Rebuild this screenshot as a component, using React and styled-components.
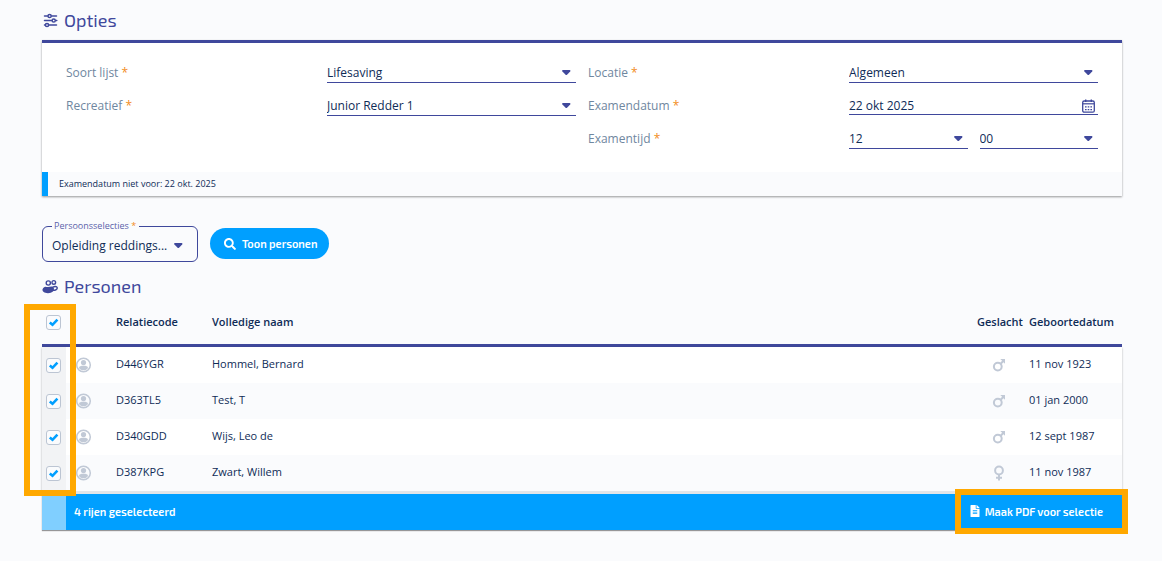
import React, { useState } from "react";
import styled, { createGlobalStyle } from "styled-components";
import { FaSearch, FaFileAlt } from "react-icons/fa";

const GlobalStyle = createGlobalStyle`
  * {
    box-sizing: border-box;
  }

  body {
    margin: 0;
    background: #fafbfd;
    color: #0f2c57;
    font-family: "Open Sans", sans-serif;
    font-size: 12px;
  }

  button,
  input,
  select {
    font: inherit;
    color: inherit;
  }
`;

const Page = styled.main`
  padding: 8px 40px 30px 42px;
`;

const Heading = styled.h2`
  display: flex;
  align-items: center;
  gap: 6px;
  margin: 0;
  height: 26px;
  padding-bottom: 2px;
  color: #3f489c;
  font-family: "Exo 2", "Open Sans", sans-serif;
  font-size: 18px;
  font-weight: 400;
  line-height: 24px;
`;

const Card = styled.section`
  margin-top: 6px;
  border-top: 3px solid #3f489c;
  background: #fff;
  box-shadow: 0 1px 2px rgba(0, 0, 0, 0.4);
`;

const Options = styled.div`
  display: grid;
  grid-template-columns: repeat(4, 1fr);
  grid-auto-rows: 21px;
  gap: 12px;
  align-items: start;
  padding: 19px 24px 23px;
`;

const Label = styled.label`
  color: #6f87a0;
  line-height: 22px;
`;

const Star = styled.span`
  color: #f28c1c;
`;

const Control = styled.div`
  display: flex;
  align-items: center;
  height: ${props => (props.$date ? 20 : 21)}px;
  padding-right: ${props => (props.$date ? 3 : 5)}px;
  border-bottom: 1px solid #3f489c;
  color: #3f489c;
`;

const Select = styled.select`
  flex: 1;
  min-width: 0;
  height: 20px;
  margin-right: -12px;
  padding: 0 16px 0 0;
  border: 0;
  outline: 0;
  appearance: none;
  background: transparent;
  color: #0f2c57;
  text-overflow: ellipsis;
`;

const DateInput = styled.input`
  flex: 1;
  min-width: 0;
  padding: 2px 0 0;
  border: 0;
  outline: 0;
  background: transparent;
  color: #0f2c57;
`;

const Caret = styled.svg`
  flex: none;
  width: 9px;
  height: 8px;
  pointer-events: none;
`;

const TimeFields = styled.div`
  display: grid;
  grid-template-columns: 1fr 1fr;
  gap: 12px;
`;

const IconButton = styled.button`
  display: flex;
  padding: 2px 0 0;
  border: 0;
  background: none;
  color: #3f489c;
`;

const Notice = styled.p`
  margin: 0;
  padding-left: 11px;
  border-left: 6px solid #009fff;
  background: #fafbfd;
  font-size: 9px;
  line-height: 24px;
`;

const Filters = styled.form`
  display: flex;
  align-items: center;
  gap: 12px;
  margin: 24px 0 12px;
`;

const Outline = styled.fieldset`
  width: 156px;
  height: 42px;
  margin: 0;
  padding: 0 14px 0 9px;
  border: 1px solid #3f489c;
  border-radius: 6px;

  legend {
    height: 12px;
    margin: 0;
    padding: 0 3px 0 2px;
    font-size: 9px;
    line-height: 12px;
  }

  label {
    color: #5a62aa;
  }
`;

const OutlineControl = styled.div`
  display: flex;
  align-items: center;
  height: 26px;
  color: #3f489c;
`;

const PillButton = styled.button`
  display: flex;
  align-items: center;
  gap: 6px;
  height: 31px;
  margin-top: 5px;
  padding: 0 12px 0 14px;
  border: 0;
  border-radius: 16px;
  background: #009fff;
  color: #fff;
  font-family: "Exo 2", "Open Sans", sans-serif;
  font-size: 11px;
  font-weight: 600;
`;

const TableWrap = styled.div`
  position: relative;
`;

const Table = styled.table`
  width: 100%;
  table-layout: fixed;
  border-collapse: separate;
  border-spacing: 0;
  font-size: 11px;

  th {
    height: 47px;
    padding: 0 0 2px 8px;
    border-bottom: 3px solid #3f489c;
    font-weight: 600;
    text-align: left;
    white-space: nowrap;
  }

  td {
    height: 36px;
    padding: 0 0 4px 8px;
  }

  tbody {
    box-shadow: 0 1px 2px rgba(0, 0, 0, 0.3);
  }

  tbody tr {
    background: #fff;
  }

  tbody tr:nth-child(even) {
    background: #fafbfd;
  }

  th:first-child,
  td:first-child {
    padding: 0 0 0 4px;
  }

  td:first-child {
    background: #f2f3f5;
  }
`;

const IconCell = styled.td`
  && {
    padding: 0 0 0 ${props => props.$indent}px;
    color: #c1c9d6;
  }

  svg {
    display: block;
    margin: ${props => (props.$center ? "0 auto" : "0")};
  }
`;

const Checkbox = styled.input`
  display: block;
  width: 15px;
  height: 15px;
  margin: 0;
  border: 1px solid #bcc5d3;
  border-radius: 3px;
  appearance: none;
  background: #fafbfd;

  &:checked {
    background: #fafbfd
      url("data:image/svg+xml,%3Csvg xmlns='http://www.w3.org/2000/svg' viewBox='0 0 13 13'%3E%3Cpath d='M2.800 6.500l2.700 2.300 4.900-5.200' fill='none' stroke='%23009fff' stroke-width='2.600'/%3E%3C/svg%3E")
      center / 13px 13px no-repeat;
  }
`;

const SelectionBar = styled.div`
  display: flex;
  align-items: center;
  justify-content: space-between;
  height: 39px;
  padding: 0 19px 2px 8px;
  border-top: 3px solid #e2e5e9;
  border-left: 24px solid #80cfff;
  background: #009fff;
  box-shadow: 0 1px 1px rgba(0, 0, 0, 0.4);
  color: #fff;
  font-family: "Exo 2", "Open Sans", sans-serif;
  font-size: 11px;
  font-weight: 600;
`;

const BarButton = styled.button`
  display: flex;
  align-items: center;
  gap: 4px;
  padding: 0;
  border: 0;
  background: none;
`;

// Highlight frames that lie over the table
const Marker = styled.div`
  position: absolute;
  border: 6px solid #ffa800;
  pointer-events: none;
`;

const ColumnMarker = styled(Marker)`
  top: 4px;
  bottom: 34px;
  left: -18px;
  width: 52px;
`;

const ActionMarker = styled(Marker)`
  right: -6px;
  bottom: -4px;
  width: 173px;
  height: 45px;
`;

const persons = [
  { code: "D446YGR", name: "Hommel, Bernard", sex: "m", birth: "11 nov 1923" },
  { code: "D363TL5", name: "Test, T", sex: "m", birth: "01 jan 2000" },
  { code: "D340GDD", name: "Wijs, Leo de", sex: "m", birth: "12 sept 1987" },
  { code: "D387KPG", name: "Zwart, Willem", sex: "v", birth: "11 nov 1987" }
];

const CaretDown = () => (
  <Caret viewBox="0 0 9 8" aria-hidden="true">
    <path
      d="M.9 2h6.700c.8 0 1.100.8.6 1.400L5 6.700c-.4.400-1 .4-1.400 0L.4 3.400C-.1 2.800.1 2 .9 2z"
      fill="currentColor"
    />
  </Caret>
);

const SlidersIcon = () => (
  <svg width="16" height="16" viewBox="0 0 16 16" aria-hidden="true">
    <g fill="none" stroke="currentColor" strokeWidth="1.5" strokeLinecap="round">
      <path d="M2.500 4h3M9.700 4h4.800M2.500 8.500h7M13.800 8.500h1M2.500 13h.5M7 13h7.500" />
      <circle cx="7.600" cy="4" r="1.600" />
      <circle cx="11.700" cy="8.500" r="1.600" />
      <circle cx="5" cy="13" r="1.600" />
    </g>
  </svg>
);

const PersonsIcon = () => (
  <svg width="16" height="16" viewBox="0 0 16 16" aria-hidden="true">
    <g fill="none" stroke="currentColor" strokeWidth="1.400">
      <circle cx="6.300" cy="5" r="2.100" />
      <circle cx="11.800" cy="4.400" r="1.800" />
      <path d="M11 9.200c1-.9 3.800-1.100 4.200.4.300 1.700-1.500 2.800-4.200 2.800" />
    </g>
    <path
      d="M1.800 9.400c1.400-1.200 2.500-.3 4.200-.3s3.800-1.100 5.200 0c1.700 1.500.9 6.100-5.200 6.100S-.6 11.200 1.800 9.400z"
      fill="currentColor"
    />
  </svg>
);

const AvatarIcon = () => (
  <svg width="16" height="16" viewBox="0 0 16 16" aria-hidden="true">
    <circle cx="7.500" cy="8" r="6.800" fill="none" stroke="currentColor" strokeWidth="1.500" />
    <circle cx="7.500" cy="5.600" r="2.600" fill="currentColor" />
    <path
      d="M3 11c0-1.800 2-2.200 4.500-2.200s4.500.4 4.500 2.200c-1 1.500-2.600 2.300-4.500 2.300S4 12.500 3 11z"
      fill="currentColor"
    />
  </svg>
);

const MaleIcon = () => (
  <svg width="14" height="16" viewBox="0 0 14 16" aria-hidden="true">
    <g fill="none" stroke="currentColor" strokeWidth="2">
      <circle cx="5.800" cy="9.600" r="3.900" />
      <path d="M8.600 6.800l3-3" />
    </g>
    <path d="M8.300 2H13v4.700z" fill="currentColor" />
  </svg>
);

const FemaleIcon = () => (
  <svg width="14" height="16" viewBox="0 0 14 16" aria-hidden="true">
    <g fill="none" stroke="currentColor" strokeWidth="2">
      <circle cx="7" cy="5.500" r="3.900" />
      <path d="M7 9.500v6M4 12.800h6" />
    </g>
  </svg>
);

const CalendarIcon = () => (
  <svg width="13" height="14" viewBox="0 0 13 14" aria-hidden="true">
    <rect x=".7" y="2" width="11.600" height="11.200" rx="1.500" fill="none" stroke="currentColor" strokeWidth="1.300" />
    <path d="M1 4.800h11" stroke="currentColor" strokeWidth="1.200" />
    <path d="M3.700.5v2.500M9.300.5v2.500" stroke="currentColor" strokeWidth="1.400" />
    <path
      d="M3 7.800h7M3 10.600h7"
      stroke="currentColor"
      strokeWidth="1.300"
      strokeDasharray="1.600 1.100"
    />
  </svg>
);

const RequiredLabel = ({ id, children }) => (
  <Label htmlFor={id}>
    {children} <Star>*</Star>
  </Label>
);

const SelectField = ({ id, value, label }) => (
  <Control>
    <Select id={id} aria-label={label}>
      <option>{value}</option>
    </Select>
    <CaretDown />
  </Control>
);

const App = () => {
  const [selected, setSelected] = useState(persons.map(person => person.code));

  const toggle = code => {
    setSelected(
      selected.includes(code)
        ? selected.filter(item => item !== code)
        : [...selected, code]
    );
  };

  const toggleAll = () => {
    setSelected(
      selected.length === persons.length ? [] : persons.map(({ code }) => code)
    );
  };

  return (
    <Page>
      <GlobalStyle />
      <Heading>
        <SlidersIcon />
        Opties
      </Heading>
      <Card>
        <Options>
          <RequiredLabel id="soort">Soort lijst</RequiredLabel>
          <SelectField id="soort" value="Lifesaving" />
          <RequiredLabel id="locatie">Locatie</RequiredLabel>
          <SelectField id="locatie" value="Algemeen" />
          <RequiredLabel id="recreatief">Recreatief</RequiredLabel>
          <SelectField id="recreatief" value="Junior Redder 1" />
          <RequiredLabel id="datum">Examendatum</RequiredLabel>
          <Control $date>
            <DateInput id="datum" type="text" defaultValue="22 okt 2025" />
            <IconButton type="button" aria-label="Kalender">
              <CalendarIcon />
            </IconButton>
          </Control>
          <span />
          <span />
          <RequiredLabel id="uur">Examentijd</RequiredLabel>
          <TimeFields>
            <SelectField id="uur" value="12" />
            <SelectField id="minuut" value="00" label="Minuten" />
          </TimeFields>
        </Options>
        <Notice>Examendatum niet voor: 22 okt. 2025</Notice>
      </Card>

      <Filters onSubmit={e => e.preventDefault()}>
        <Outline>
          <legend>
            <label htmlFor="selectie">
              Persoonsselecties <Star>*</Star>
            </label>
          </legend>
          <OutlineControl>
            <Select id="selectie">
              <option>Opleiding reddings...</option>
            </Select>
            <CaretDown />
          </OutlineControl>
        </Outline>
        <PillButton type="submit">
          <FaSearch size={12} />
          Toon personen
        </PillButton>
      </Filters>

      <Heading>
        <PersonsIcon />
        Personen
      </Heading>
      <TableWrap>
        <Table>
          <colgroup>
            <col width="24" />
            <col width="42" />
            <col width="96" />
            <col />
            <col width="52" />
            <col width="101" />
          </colgroup>
          <thead>
            <tr>
              <th>
                <Checkbox
                  type="checkbox"
                  aria-label="Alles selecteren"
                  checked={selected.length === persons.length}
                  onChange={toggleAll}
                />
              </th>
              <th />
              <th>Relatiecode</th>
              <th>Volledige naam</th>
              <th>Geslacht</th>
              <th>Geboortedatum</th>
            </tr>
          </thead>
          <tbody>
            {persons.map(({ code, name, sex, birth }) => (
              <tr key={code}>
                <td>
                  <Checkbox
                    type="checkbox"
                    aria-label={name}
                    checked={selected.includes(code)}
                    onChange={() => toggle(code)}
                  />
                </td>
                <IconCell $indent={10}>
                  <AvatarIcon />
                </IconCell>
                <td>{code}</td>
                <td>{name}</td>
                <IconCell $indent={8} $center>
                  {sex === "m" ? <MaleIcon /> : <FemaleIcon />}
                </IconCell>
                <td>{birth}</td>
              </tr>
            ))}
          </tbody>
        </Table>
        <SelectionBar>
          <span>{selected.length} rijen geselecteerd</span>
          <BarButton type="button">
            <FaFileAlt size={12} />
            Maak PDF voor selectie
          </BarButton>
        </SelectionBar>
        <ColumnMarker />
        <ActionMarker />
      </TableWrap>
    </Page>
  );
};

export default App;
